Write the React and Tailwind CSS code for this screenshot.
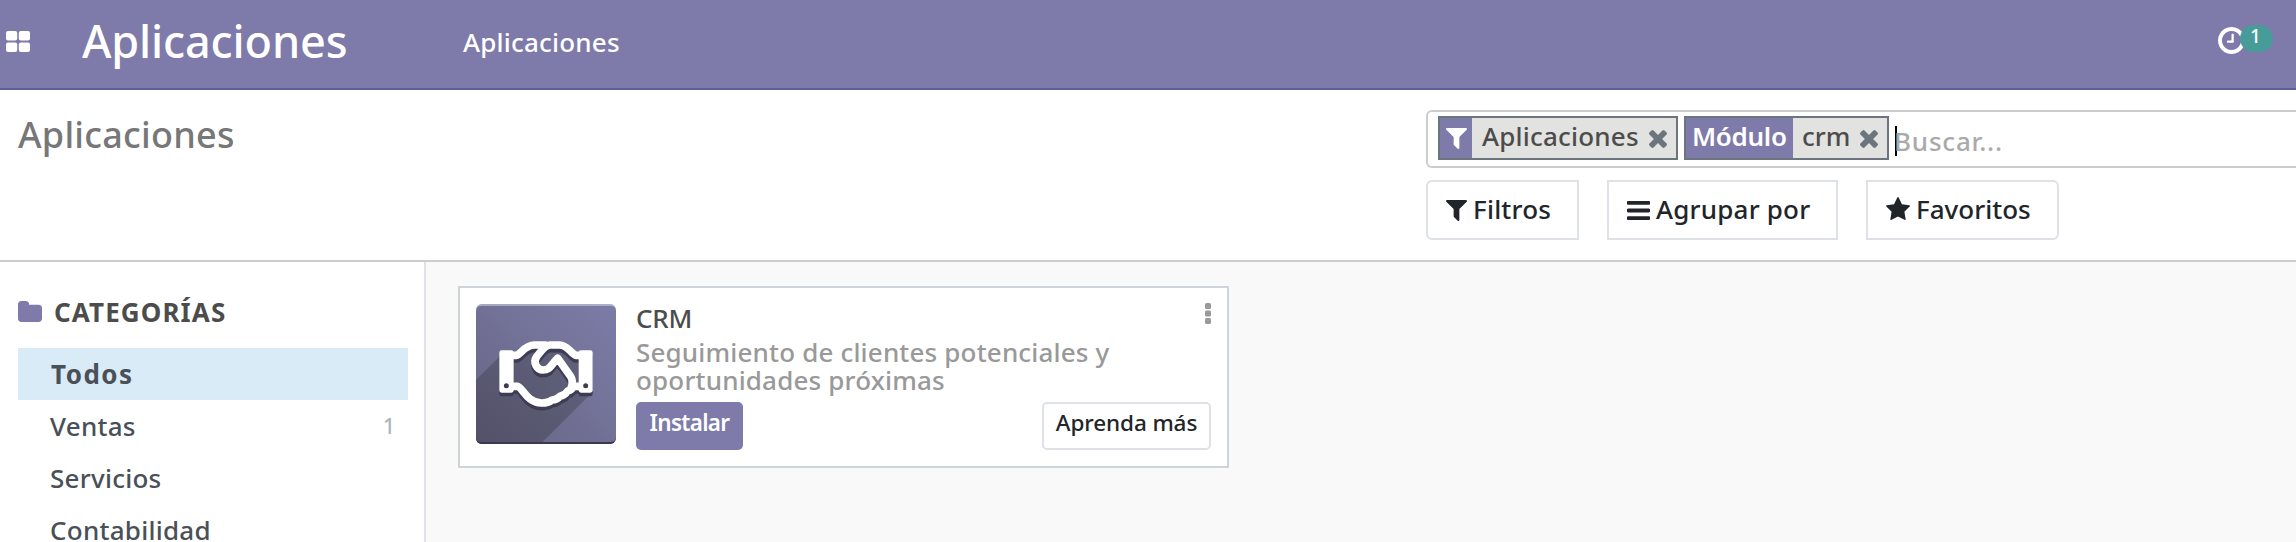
import React from "react";

const PATHS = {
  filter: {
    box: "192 256 1408 1408",
    d: "M1595 295q17 41-14 70l-493 493v742q0 42-39 59-13 5-25 5-27 0-45-19l-256-256q-19-19-19-45v-486l-493-493q-31-29-14-70 17-39 59-39h1280q42 0 59 39z",
  },
  times: {
    box: "302 366 1188 1188",
    d: "M1490 1322q0 40-28 68l-136 136q-28 28-68 28t-68-28l-294-294-294 294q-28 28-68 28t-68-28l-136-136q-28-28-28-68t28-68l294-294-294-294q-28-28-28-68t28-68l136-136q28-28 68-28t68 28l294 294 294-294q28-28 68-28t68 28l136 136q28 28 28 68t-28 68l-294 294 294 294q28 28 28 68z",
  },
  bars: {
    box: "128 256 1536 1280",
    d: "M1664 1344v128q0 26-19 45t-45 19h-1408q-26 0-45-19t-19-45v-128q0-26 19-45t45-19h1408q26 0 45 19t19 45zm0-512v128q0 26-19 45t-45 19h-1408q-26 0-45-19t-19-45v-128q0-26 19-45t45-19h1408q26 0 45 19t19 45zm0-512v128q0 26-19 45t-45 19h-1408q-26 0-45-19t-19-45v-128q0-26 19-45t45-19h1408q26 0 45 19t19 45z",
  },
  star: {
    box: "64 32 1664 1587",
    d: "M1728 647q0 22-26 48l-363 354 86 500q1 7 1 20 0 21-10.5 35.5t-30.5 14.5q-19 0-40-12l-449-236-449 236q-22 12-40 12-21 0-31.5-14.5t-10.5-35.5q0-6 2-20l86-500-364-354q-25-27-25-48 0-37 56-46l502-73 225-455q19-41 49-41t49 41l225 455 502 73q56 9 56 46z",
  },
  folder: {
    box: "64 128 1664 1408",
    d: "M1728 608v704q0 92-66 158t-158 66h-1216q-92 0-158-66t-66-158v-960q0-92 66-158t158-66h320q92 0 158 66t66 158v32h672q92 0 158 66t66 158z",
  },
  clock: {
    box: "128 128 1536 1536",
    d: "M1024 544v448q0 14-9 23t-23 9h-320q-14 0-23-9t-9-23v-64q0-14 9-23t23-9h224v-352q0-14 9-23t23-9h64q14 0 23 9t9 23zm416 352q0-148-73-273t-198-198-273-73-273 73-198 198-73 273 73 273 198 198 273 73 273-73 198-198 73-273zm224 0q0 209-103 385.5t-279.5 279.5-385.5 103-385.5-103-279.5-279.5-103-385.5 103-385.5 279.5-279.5 385.5-103 385.5 103 279.5 279.5 103 385.5z",
  },
};

function Icon({ name, className }) {
  return (
    <svg viewBox={PATHS[name].box} preserveAspectRatio="none" fill="currentColor" className={`block shrink-0 ${className}`}>
      <path d={PATHS[name].d} />
    </svg>
  );
}

function GridIcon() {
  return (
    <svg viewBox="0 0 24 21" fill="currentColor" className="block h-[21px] w-[24px] shrink-0">
      <rect width="11.2" height="9.6" rx="2" />
      <rect x="12.8" width="11.2" height="9.6" rx="2" />
      <rect y="11.4" width="11.2" height="9.6" rx="2" />
      <rect x="12.8" y="11.4" width="11.2" height="9.6" rx="2" />
    </svg>
  );
}

function Kebab() {
  return (
    <svg viewBox="0 0 6 21" fill="currentColor" className="mt-[15px] block h-[21px] w-[6px] shrink-0 text-[#999999]">
      <rect width="6" height="6" rx="1.5" />
      <rect y="7.5" width="6" height="6" rx="1.5" />
      <rect y="15" width="6" height="6" rx="1.5" />
    </svg>
  );
}

const HAND_OUTLINE =
  "M108 154 H122 C136 151 144 123 176 123 H208 M108 247 H124 C140 250 152 296 196 297 C212 297 222 293 228 288 C238 288 246 284 252 277 C262 275 270 270 275 261 C284 259 290 253 292 247 H314 M312 154 H300 C286 150 276 123 250 123 H222 C208 123 200 136 182 158 C170 176 182 198 201 198 C222 198 222 186 245 163 L283 216 C290 226 290 238 286 250";

function HandshakeShape({ color }) {
  return (
    <g>
      <path d={HAND_OUTLINE} fill="none" stroke={color} strokeWidth="23" strokeLinecap="round" strokeLinejoin="round" />
      <rect x="70" y="139" width="43" height="127" rx="7" fill={color} />
      <rect x="308" y="139" width="42" height="127" rx="7" fill={color} />
    </g>
  );
}

function CrmIcon() {
  return (
    <svg viewBox="0 0 420 420" className="block size-[140px] shrink-0">
      <defs>
        <linearGradient id="tile" x1="1" y1="0" x2="0" y2="1">
          <stop offset="0" stopColor="#7d7ca8" />
          <stop offset="1" stopColor="#666582" />
        </linearGradient>
        <linearGradient id="cast" x1="1" y1="0" x2="0" y2="1">
          <stop offset="0" stopColor="#64637f" />
          <stop offset="1" stopColor="#525168" />
        </linearGradient>
        <clipPath id="tileClip">
          <rect width="420" height="420" rx="18" />
        </clipPath>
      </defs>
      <g clipPath="url(#tileClip)">
        <rect width="420" height="420" fill="url(#tile)" />
        <path
          d="M0 228 L75 153 L113 150 L165 121 L250 121 L308 154 V248 H350 V264 L200 414 V420 H0 Z"
          fill="url(#cast)"
        />
        <path d="M0 20 V0 H420 V20 Q420 6 402 6 H18 Q0 6 0 20Z" fill="#ffffff" fillOpacity="0.38" />
        <path d="M0 398 V420 H420 V398 Q420 414 402 414 H18 Q0 414 0 398Z" fill="#3a394f" />
        <g transform="translate(0 11)">
          <HandshakeShape color="#3d3c52" />
        </g>
        <HandshakeShape color="#ffffff" />
        <circle cx="91" cy="245" r="7.5" fill="#3d3c52" />
        <circle cx="329" cy="245" r="7.5" fill="#3d3c52" />
      </g>
    </svg>
  );
}

function Navbar() {
  return (
    <header className="flex h-[90px] items-start border-b-2 border-[#5f5e97] bg-[#7e7aa9] pl-[6px] text-white">
      <div className="pt-[31px]">
        <GridIcon />
      </div>
      <span className="ml-[52px] w-[381px] pt-[12px] text-[45px] leading-[58px] tracking-[-0.15px]">Aplicaciones</span>
      <span className="pt-[16px] text-[26px] leading-[52px] tracking-[0.2px]">Aplicaciones</span>
      <div className="ml-auto flex pr-[23px]">
        <Icon name="clock" className="mt-[27px] size-[27px]" />
        <span className="relative mt-[25px] -ml-[5px] h-[27px] w-[33px] rounded-full bg-[#479c9a] pr-[2px] text-center text-[19px] leading-[23px]">
          1
        </span>
      </div>
    </header>
  );
}

function SearchBox() {
  return (
    <div className="flex h-[58px] items-start rounded-l-[6px] border-2 border-r-0 border-[#cccccc] bg-white pt-[4px] pl-[10px]">
      <div className="flex h-[44px] w-[240px] border-2 border-[#6c757d] bg-[#e2e2e0]">
        <span className="flex w-[32px] justify-center bg-[#7e7aa9] pt-[10px] text-white">
          <Icon name="filter" className="size-[21px]" />
        </span>
        <span className="w-[177px] pl-[10px] text-[26px] leading-[36px] tracking-[0.2px] text-[#4c4c4c]">Aplicaciones</span>
        <Icon name="times" className="mt-[12px] size-[18px] text-[#6c757d]" />
      </div>
      <div className="ml-[6px] flex h-[44px] w-[205px] border-2 border-[#6c757d] bg-[#e2e2e0]">
        <span className="w-[107px] bg-[#7e7aa9] pl-[6px] text-[26px] leading-[37px] font-semibold tracking-[-0.3px] text-white">
          Módulo
        </span>
        <span className="w-[67px] pl-[9px] text-[26px] leading-[36px] text-[#4c4c4c]">crm</span>
        <Icon name="times" className="mt-[12px] size-[18px] text-[#6c757d]" />
      </div>
      <span className="mt-[10px] ml-[6px] h-[30px] w-[2px] bg-black" />
      <span className="-ml-[3px] pt-[8px] text-[26px] leading-[34px] tracking-[0.8px] text-[#aaaaaa]">Buscar...</span>
    </div>
  );
}

function ControlPanel() {
  return (
    <section className="flex h-[172px] justify-between border-b-2 border-[#cccccc] bg-white">
      <h1 className="pt-[23px] pl-[18px] text-[36px] leading-[44px] font-medium tracking-[0.25px] text-[#777777]">Aplicaciones</h1>
      <div className="w-[870px] pt-[20px]">
        <SearchBox />
        <div className="mt-[12px] flex text-[26px] font-medium tracking-[0.2px] text-[#212529]">
          <button className="flex h-[60px] w-[153px] rounded-l-[6px] border-2 border-[#dee2e6] pl-[18px]">
            <Icon name="filter" className="mt-[18px] size-[21px]" />
            <span className="ml-[6px] h-[56px] leading-[54px]">Filtros</span>
          </button>
          <button className="ml-[28px] flex h-[60px] w-[231px] border-2 border-[#dee2e6] pl-[18px]">
            <Icon name="bars" className="mt-[19px] h-[19px] w-[23px]" />
            <span className="ml-[6px] h-[56px] leading-[54px]">Agrupar por</span>
          </button>
          <button className="ml-[28px] flex h-[60px] w-[193px] rounded-r-[6px] border-2 border-[#dee2e6] pl-[18px]">
            <Icon name="star" className="mt-[15px] h-[23px] w-[24px]" />
            <span className="ml-[6px] h-[56px] leading-[54px] tracking-[0px]">Favoritos</span>
          </button>
        </div>
      </div>
    </section>
  );
}

const CATEGORIES = [{ name: "Ventas", count: 1 }, { name: "Servicios" }, { name: "Contabilidad" }];

function Sidebar() {
  return (
    <aside className="w-[426px] shrink-0 border-r-2 border-[#dee2e6] bg-white pt-[26px] pr-[16px] pl-[18px] text-[26px] leading-[52px] text-[#495057]">
      <div className="flex h-[60px] text-[#4c4c4c]">
        <Icon name="folder" className="mt-[13px] h-[21px] w-[24px] text-[#7e7aa9]" />
        <span className="ml-[12px] h-[48px] leading-[48px] font-bold tracking-[1.1px]">CATEGORÍAS</span>
      </div>
      <div className="h-[52px] bg-[#d9ebf7] pl-[33px] font-bold tracking-[1.5px]">Todos</div>
      {CATEGORIES.map((c) => (
        <div key={c.name} className="flex h-[52px] justify-between pr-[13px] pl-[32px]">
          <span className="tracking-[0.25px]">{c.name}</span>
          {c.count && <span className="text-[21px] text-[#adb5bd]">{c.count}</span>}
        </div>
      ))}
    </aside>
  );
}

function AppCard() {
  return (
    <article className="flex h-[182px] w-[771px] border-2 border-[#ced4da] bg-white pr-[16px] pl-[16px]">
      <div className="pt-[16px]">
        <CrmIcon />
      </div>
      <div className="ml-[20px] flex flex-1 flex-col">
        <div className="flex justify-between">
          <h2 className="mt-[14px] h-[36px] text-[26px] leading-[32px] font-medium tracking-[-0.2px] text-[#4c4c4c]">CRM</h2>
          <Kebab />
        </div>
        <p className="text-[26px] leading-[28px] tracking-[0.17px] whitespace-nowrap text-[#999999]">
          Seguimiento de clientes potenciales y
          <br />
          oportunidades próximas
        </p>
        <div className="mt-[8px] flex justify-between text-[22.5px] leading-[42px]">
          <button className="h-[48px] w-[107px] rounded-[5px] bg-[#7e7aa9] pb-[6px] font-semibold tracking-[-0.7px] text-white">
            Instalar
          </button>
          <button className="h-[48px] w-[169px] rounded-[5px] border-2 border-[#dee2e6] pb-[6px] leading-[38px] font-medium tracking-[-0.1px] text-[#212529]">
            Aprenda más
          </button>
        </div>
      </div>
    </article>
  );
}

export default function App() {
  return (
    <div className="flex h-[542px] w-[2296px] flex-col overflow-hidden bg-white font-['Noto_Sans',sans-serif] font-medium">
      <Navbar />
      <ControlPanel />
      <main className="flex min-h-0 flex-1 overflow-hidden bg-[#f9f9f9]">
        <Sidebar />
        <div className="flex-1 pt-[24px] pl-[32px]">
          <AppCard />
        </div>
      </main>
    </div>
  );
}
